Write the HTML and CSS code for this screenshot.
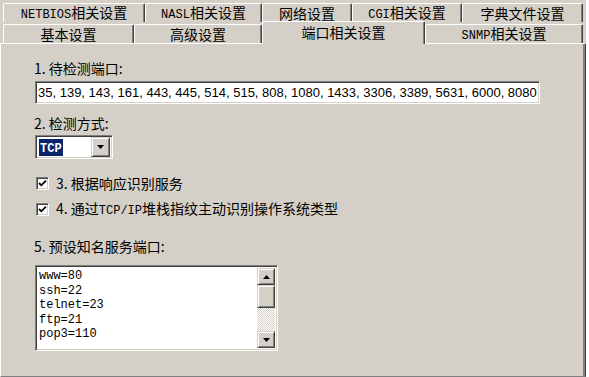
FILE: index.html
```html
<!DOCTYPE html>
<html lang="zh-CN">
<head>
    <meta charset="UTF-8">
    <title>端口相关设置</title>
    <link rel="stylesheet" href="styles.css">
</head>
<body>
    <div class="dialog">
        <!-- two rows of tabs, the front row holds the active one -->
        <div class="tab-row back">
            <div class="tab"><span><span class="en">NETBIOS</span>相关设置</span></div>
            <div class="tab"><span><span class="en">NASL</span>相关设置</span></div>
            <div class="tab"><span>网络设置</span></div>
            <div class="tab"><span><span class="en">CGI</span>相关设置</span></div>
            <div class="tab"><span>字典文件设置</span></div>
        </div>
        <div class="tab-row front">
            <div class="tab"><span>基本设置</span></div>
            <div class="tab"><span>高级设置</span></div>
            <div class="tab active"><span>端口相关设置</span></div>
            <div class="tab"><span><span class="en">SNMP</span>相关设置</span></div>
        </div>

        <div class="panel">
            <div class="label first">1. 待检测端口:</div>
            <div class="field sunken">
                <span class="field-text">35, 139, 143, 161, 443, 445, 514, 515, 808, 1080, 1433, 3306, 3389, 5631, 6000, 8080</span>
            </div>

            <div class="label second">2. 检测方式:</div>
            <div class="combo sunken">
                <span class="combo-value"><span class="en">TCP</span></span>
                <span class="btn combo-btn">
                    <svg width="7" height="4" viewBox="0 0 7 4"><path d="M0 0h7L3.5 4z" fill="#000"/></svg>
                </span>
            </div>

            <div class="check-row first-check">
                <span class="checkbox">
                    <svg width="9" height="9" viewBox="0 0 9 9"><path d="M1 4l2.3 2.3L8 1.6" fill="none" stroke="#000" stroke-width="1.8"/></svg>
                </span>
                <span>3. 根据响应识别服务</span>
            </div>
            <div class="check-row">
                <span class="checkbox">
                    <svg width="9" height="9" viewBox="0 0 9 9"><path d="M1 4l2.3 2.3L8 1.6" fill="none" stroke="#000" stroke-width="1.8"/></svg>
                </span>
                <span>4. 通过<span class="en">TCP/IP</span>堆栈指纹主动识别操作系统类型</span>
            </div>

            <div class="label fifth">5. 预设知名服务端口:</div>
            <div class="list sunken">
                <div class="list-lines">
                    <div>www=80</div>
                    <div>ssh=22</div>
                    <div>telnet=23</div>
                    <div>ftp=21</div>
                    <div>pop3=110</div>
                </div>
                <div class="scrollbar">
                    <span class="btn scroll-btn">
                        <svg width="7" height="4" viewBox="0 0 7 4"><path d="M0 4h7L3.5 0z" fill="#000"/></svg>
                    </span>
                    <span class="btn thumb"></span>
                    <span class="track"></span>
                    <span class="btn scroll-btn">
                        <svg width="7" height="4" viewBox="0 0 7 4"><path d="M0 0h7L3.5 4z" fill="#000"/></svg>
                    </span>
                </div>
            </div>
        </div>
    </div>
</body>
</html>
```

FILE: styles.css
```css
body {
    margin: 0;
    background: #fff;
    font-family: "Noto Sans CJK SC", "Liberation Sans", sans-serif;
    font-size: 14px;
    line-height: 16px;
    color: #000;
}

.dialog {
    width: 586px;
    height: 377px;
    background: #d4d0c8;
    display: flex;
    flex-direction: column;
}

.en {
    font-family: "Liberation Mono", monospace;
    font-size: 12px;
}

/* Tabs */
.tab-row {
    display: grid;
    padding-left: 3px;
    align-items: end;
}

.tab-row.back {
    margin-top: 3px;
    height: 19px;
    grid-template-columns: 142px 117px 90px 110px 121px;
}

.tab-row.front {
    margin-top: -1px;
    height: 22px;
    grid-template-columns: 131px 128px 163px 158px;
}

.tab {
    height: 19px;
    box-sizing: border-box;
    display: flex;
    justify-content: center;
    align-items: center;
    border-top: 1px solid #fff;
    border-left: 1px solid #fff;
    border-right: 1px solid #404040;
    border-radius: 2px 2px 0 0;
    box-shadow: inset -1px 0 #808080;
    white-space: nowrap;
}

.tab.active {
    height: 23px;
    margin-bottom: -1px;
    padding-bottom: 2px;
    position: relative;
    z-index: 1;
    background: #d4d0c8;
}

/* Panel */
.panel {
    flex: 1;
    display: flex;
    flex-direction: column;
    align-items: flex-start;
    padding-left: 33px;
    border-top: 1px solid #fff;
    border-left: 1px solid #fff;
    border-right: 1px solid #404040;
    border-bottom: 1px solid #808080;
    box-shadow: inset -2px 0 #808080;
}

.label.first { margin-top: 16px; }
.label.second { margin-top: 11px; }
.label.fifth { margin-top: 19px; }

.sunken {
    box-sizing: border-box;
    border: 1px solid;
    border-color: #808080 #fff #fff #808080;
    box-shadow: inset 1px 1px #404040, inset -1px -1px #d4d0c8;
    background: #fff;
}

.btn {
    box-sizing: border-box;
    display: flex;
    justify-content: center;
    align-items: center;
    background: #d4d0c8;
    border: 1px solid;
    border-color: #d4d0c8 #404040 #404040 #d4d0c8;
    box-shadow: inset 1px 1px #fff, inset -1px -1px #808080;
}

.field {
    margin-top: 5px;
    margin-left: 1px;
    width: 505px;
    height: 23px;
    display: flex;
    align-items: center;
    overflow: hidden;
    padding: 0 1px 0 2px;
}

.field-text {
    white-space: nowrap;
    font-family: "Liberation Sans", sans-serif;
    font-size: 13px;
}

.combo {
    margin-top: 4px;
    margin-left: 1px;
    width: 78px;
    height: 24px;
    display: flex;
    align-items: center;
    justify-content: space-between;
    padding: 0 2px 0 3px;
}

.combo-value {
    background: #0a246a;
    color: #fff;
    padding: 0 1px;
    line-height: 14px;
    font-weight: bold;
}

.combo-btn {
    width: 19px;
    height: 20px;
}

.check-row {
    display: flex;
    align-items: center;
    margin-top: 9px;
    margin-left: 2px;
    gap: 7px;
}

.check-row.first-check { margin-top: 16px; }

.checkbox {
    width: 13px;
    height: 13px;
    box-sizing: border-box;
    display: flex;
    justify-content: center;
    align-items: center;
    background: #fff;
    border: 1px solid;
    border-color: #808080 #fff #fff #808080;
    box-shadow: inset 1px 1px #404040, inset -1px -1px #d4d0c8;
}

.list {
    margin-top: 11px;
    margin-left: 1px;
    width: 243px;
    height: 86px;
    display: flex;
    padding: 2px;
}

.list-lines {
    flex: 1;
    padding: 1px 0 0 1px;
    font-family: "Liberation Mono", monospace;
    font-size: 12px;
    line-height: 14.5px;
}

.scrollbar {
    width: 18px;
    display: flex;
    flex-direction: column;
}

.scroll-btn {
    height: 17px;
}

.thumb {
    height: 23px;
}

.track {
    flex: 1;
    background: repeating-conic-gradient(#d4d0c8 0 25%, #fff 0 50%) 0 0 / 2px 2px;
}
```
